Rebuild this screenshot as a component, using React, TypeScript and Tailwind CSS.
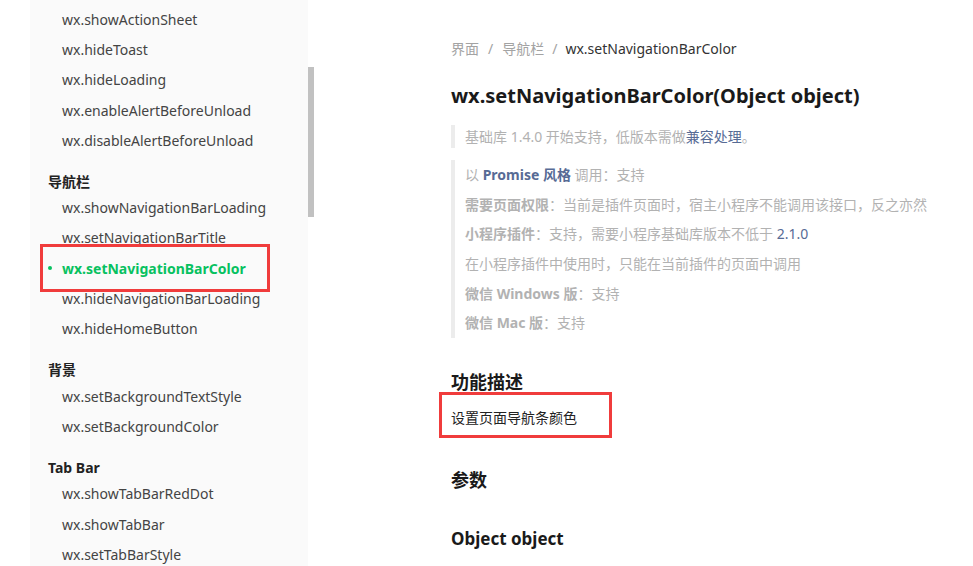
const font = { fontFamily: '"Noto Sans", "Noto Sans CJK SC", sans-serif' }

type NavEntry = { type: 'head'; label: string } | { type: 'item'; label: string; active?: boolean }

const nav: NavEntry[] = [
  { type: 'item', label: 'wx.showActionSheet' },
  { type: 'item', label: 'wx.hideToast' },
  { type: 'item', label: 'wx.hideLoading' },
  { type: 'item', label: 'wx.enableAlertBeforeUnload' },
  { type: 'item', label: 'wx.disableAlertBeforeUnload' },
  { type: 'head', label: '导航栏' },
  { type: 'item', label: 'wx.showNavigationBarLoading' },
  { type: 'item', label: 'wx.setNavigationBarTitle' },
  { type: 'item', label: 'wx.setNavigationBarColor', active: true },
  { type: 'item', label: 'wx.hideNavigationBarLoading' },
  { type: 'item', label: 'wx.hideHomeButton' },
  { type: 'head', label: '背景' },
  { type: 'item', label: 'wx.setBackgroundTextStyle' },
  { type: 'item', label: 'wx.setBackgroundColor' },
  { type: 'head', label: 'Tab Bar' },
  { type: 'item', label: 'wx.showTabBarRedDot' },
  { type: 'item', label: 'wx.showTabBar' },
  { type: 'item', label: 'wx.setTabBarStyle' },
]

function Sidebar() {
  return (
    <div className="flex h-full shrink-0">
      <div className="w-[30px] bg-white" />
      <div className="relative w-[278px] bg-[#fafafa] pt-[4px] overflow-hidden">
        {nav.map((n, i) =>
          n.type === 'head' ? (
            <div key={i} className="mt-[15px] flex h-[22px] items-center pl-[18px] text-[14px] font-bold text-[#222]">
              {n.label}
            </div>
          ) : (
            <div
              key={i}
              className={`relative flex h-[30.3px] items-center pl-[32px] text-[14px] ${
                n.active ? 'font-bold text-[#07c160]' : 'text-[#444]'
              }`}
            >
              {n.active && <span className="absolute left-[18px] top-[13px] h-[4px] w-[4px] rounded-full bg-[#07c160]" />}
              {n.label}
            </div>
          )
        )}
        {/* annotation box */}
        <div className="absolute left-[10px] top-[244px] h-[48px] w-[230px] border-[3px] border-[#f03c3c]" />
      </div>
      {/* scrollbar */}
      <div className="w-[7px] bg-white pt-[67px]">
        <div className="h-[150px] w-[6px] bg-[#c1c1c1]" />
      </div>
    </div>
  )
}

function Content() {
  const grey = 'text-[#b2b2b2]'
  const link = 'text-[#576b95]'
  return (
    <div className="relative flex-1 bg-white pl-[136px] pt-[37px]">
      <div className="flex h-[22px] items-center text-[14px]">
        <span className="text-[#a3a3a3]">界面</span>
        <span className="mx-[9px] text-[#a3a3a3]">/</span>
        <span className="text-[#a3a3a3]">导航栏</span>
        <span className="mx-[8px] text-[#a3a3a3]">/</span>
        <span className="text-[#333]">wx.setNavigationBarColor</span>
      </div>
      <h1 className="mt-[23px] text-[20px] font-bold leading-[28px] text-[#1a1a1a]">
        wx.setNavigationBarColor(Object object)
      </h1>
      <div className={`mt-[15px] border-l-4 border-[#ececec] py-[2px] pl-[10px] text-[14px] leading-[19px] ${grey}`}>
        基础库 1.4.0 开始支持，低版本需做<span className={link}>兼容处理</span>。
      </div>
      <div className={`mt-[12px] border-l-4 border-[#ececec] pl-[10px] text-[14px] ${grey}`}>
        <div className="flex h-[29.6px] items-center">
          <span>
            以 <b className={link}>Promise 风格</b> 调用：支持
          </span>
        </div>
        <div className="flex h-[29.6px] items-center">
          <span>
            <b>需要页面权限</b>：当前是插件页面时，宿主小程序不能调用该接口，反之亦然
          </span>
        </div>
        <div className="flex h-[29.6px] items-center">
          <span>
            <b>小程序插件</b>：支持，需要小程序基础库版本不低于 <span className={link}>2.1.0</span>
          </span>
        </div>
        <div className="flex h-[29.6px] items-center">在小程序插件中使用时，只能在当前插件的页面中调用</div>
        <div className="flex h-[29.6px] items-center">
          <span>
            <b>微信 Windows 版</b>：支持
          </span>
        </div>
        <div className="flex h-[29.6px] items-center">
          <span>
            <b>微信 Mac 版</b>：支持
          </span>
        </div>
      </div>
      <h2 className="mt-[31px] text-[18px] font-bold leading-[26px] text-[#1a1a1a]">功能描述</h2>
      <p className="mt-[13px] text-[14px] leading-[20px] text-[#222]">设置页面导航条颜色</p>
      <h2 className="mt-[39px] text-[18px] font-bold leading-[26px] text-[#1a1a1a]">参数</h2>
      <h3 className="mt-[34px] text-[17px] font-bold leading-[24px] text-[#1a1a1a]">Object object</h3>
      {/* annotation box */}
      <div className="absolute left-[124px] top-[392px] h-[46px] w-[173px] border-[3px] border-[#f03c3c]" />
    </div>
  )
}

export default function App() {
  return (
    <div className="flex h-[566px] w-[973px] overflow-hidden bg-white" style={font}>
      <Sidebar />
      <Content />
    </div>
  )
}
